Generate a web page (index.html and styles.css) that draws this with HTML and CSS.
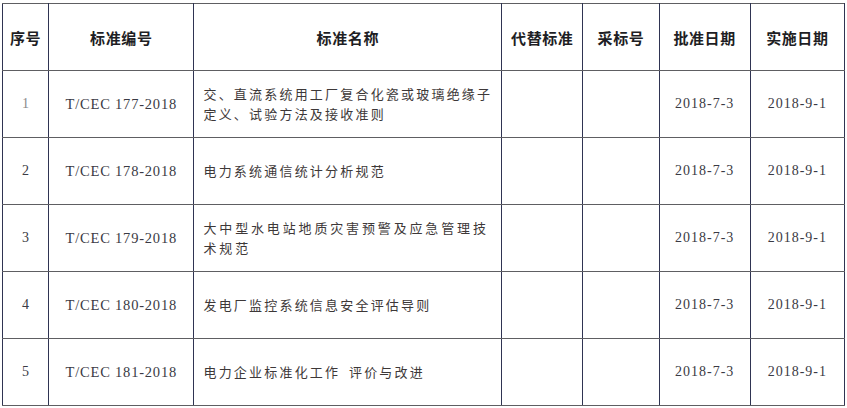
FILE: index.html
```html
<!DOCTYPE html>
<html lang="zh">
<head>
<meta charset="utf-8">
<link rel="stylesheet" href="styles.css">
</head>
<body>
<table class="std">
  <colgroup>
    <col class="c-no"><col class="c-code"><col class="c-name"><col class="c-rep"><col class="c-adopt"><col class="c-appr"><col class="c-impl">
  </colgroup>
  <thead>
    <tr>
      <th>序号</th><th>标准编号</th><th>标准名称</th><th>代替标准</th><th>采标号</th><th>批准日期</th><th>实施日期</th>
    </tr>
  </thead>
  <tbody>
    <tr>
      <td class="num light">1</td><td class="code">T/CEC 177-2018</td><td class="name">交、直流系统用工厂复合化瓷或玻璃绝缘子定义、试验方法及接收准则</td><td></td><td></td><td class="date">2018-7-3</td><td class="date">2018-9-1</td>
    </tr>
    <tr>
      <td class="num">2</td><td class="code">T/CEC 178-2018</td><td class="name">电力系统通信统计分析规范</td><td></td><td></td><td class="date">2018-7-3</td><td class="date">2018-9-1</td>
    </tr>
    <tr>
      <td class="num">3</td><td class="code">T/CEC 179-2018</td><td class="name wide">大中型水电站地质灾害预警及应急管理技术规范</td><td></td><td></td><td class="date">2018-7-3</td><td class="date">2018-9-1</td>
    </tr>
    <tr>
      <td class="num">4</td><td class="code">T/CEC 180-2018</td><td class="name">发电厂监控系统信息安全评估导则</td><td></td><td></td><td class="date">2018-7-3</td><td class="date">2018-9-1</td>
    </tr>
    <tr>
      <td class="num">5</td><td class="code">T/CEC 181-2018</td><td class="name">电力企业标准化工作&ensp;评价与改进</td><td></td><td></td><td class="date">2018-7-3</td><td class="date">2018-9-1</td>
    </tr>
  </tbody>
</table>
</body>
</html>
```

FILE: styles.css
```css
html, body {
  margin: 0;
  padding: 0;
  background: #ffffff;
}

body {
  padding: 3px 0 0 2px;
}

.std {
  border-collapse: collapse;
  table-layout: fixed;
  width: 843px;
  font-family: "Noto Sans CJK SC", sans-serif;
  color: #3d3838;
}

.c-no { width: 46px; }
.c-code { width: 145px; }
.c-name { width: 307px; }
.c-rep { width: 81px; }
.c-adopt { width: 76px; }
.c-appr { width: 91px; }
.c-impl { width: 94px; }

.std th,
.std td {
  border-top: 1px solid #5e5e62;
  border-bottom: 1px solid #5e5e62;
  border-left: 1.5px solid #2f3452;
  border-right: 1.5px solid #2f3452;
  height: 66px;
  padding: 0;
  text-align: center;
  vertical-align: middle;
}

.std th {
  font-size: 15px;
  font-weight: 700;
  color: #1e1e24;
  letter-spacing: 0.6px;
}

.num {
  font-family: "Liberation Serif", serif;
  font-size: 14px;
  color: #3b3b44;
}

.num.light {
  color: #8a8a8a;
}

.code {
  font-family: "Liberation Serif", serif;
  font-size: 14.5px;
  letter-spacing: 0.8px;
  color: #3a3a44;
}

.date {
  font-family: "Liberation Serif", serif;
  font-size: 14px;
  letter-spacing: 1px;
  color: #3a3a44;
}

.std td.name {
  text-align: left;
  padding: 0 0 0 9px;
  font-size: 13px;
  letter-spacing: 2.2px;
  line-height: 20px;
  color: #3d3838;
}

.std td.name.wide {
  letter-spacing: 2.85px;
}
```
